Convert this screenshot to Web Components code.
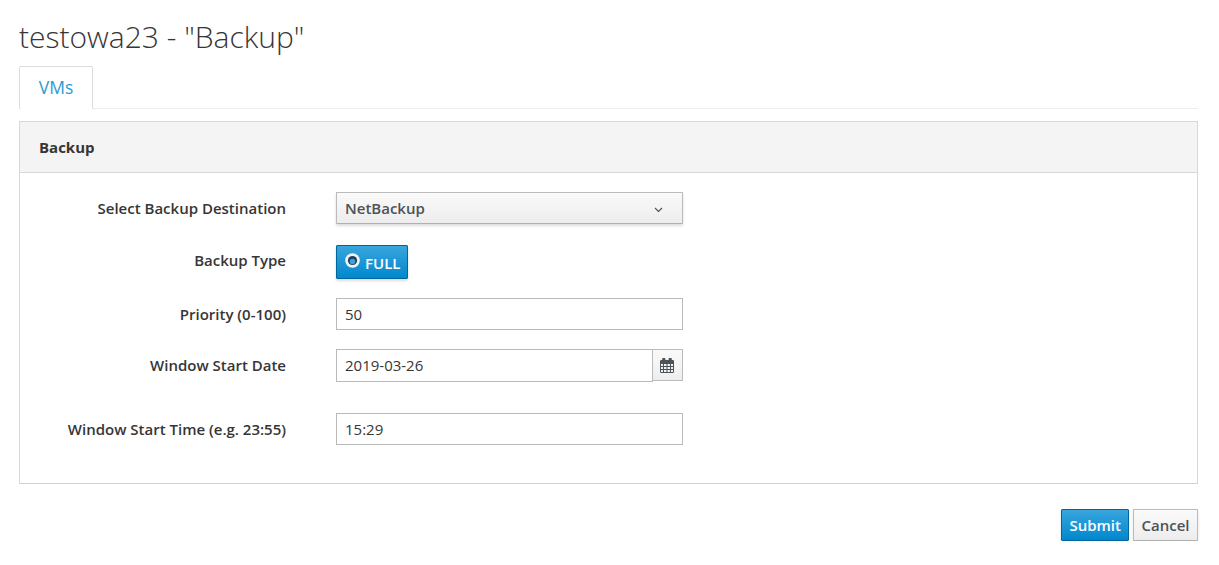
<!DOCTYPE html>
<html lang="en">
<head>
<meta charset="utf-8">
<title>Backup</title>
<style>
  html, body { margin: 0; background: #fff; }
  body { font-family: "Open Sans", "Liberation Sans", sans-serif; color: #363636; }
</style>
</head>
<body>
<backup-page></backup-page>

<script>
class PageTitle extends HTMLElement {
  constructor() {
    super();
    this.attachShadow({ mode: "open" }).innerHTML = `
      <style>
        :host { display: block; height: 66px; box-sizing: border-box; padding-top: 18px; }
        h1 { margin: 0; font-size: 30px; line-height: 38px; font-weight: 300; color: #363636; }
      </style>
      <h1><slot></slot></h1>`;
  }
}

class TabBar extends HTMLElement {
  constructor() {
    super();
    this.attachShadow({ mode: "open" }).innerHTML = `
      <style>
        :host { display: flex; height: 43px; box-sizing: border-box; border-bottom: 1px solid #ededed; margin-right: 21px; }
        a {
          display: block; box-sizing: border-box; width: 74px; height: 43px; text-align: center;
          border: 1px solid #ddd; border-bottom: 0; border-radius: 2px 2px 0 0; background: #fff;
          font-size: 17.5px; line-height: 41px; color: #2b9bd2; text-decoration: none;
        }
      </style>
      <a href="#"><slot></slot></a>`;
  }
}

class BackupPanel extends HTMLElement {
  constructor() {
    super();
    this.attachShadow({ mode: "open" }).innerHTML = `
      <style>
        :host { display: block; box-sizing: border-box; height: 363px; margin: 12px 21px 0 0; border: 1px solid #d8d8d8; border-bottom-color: #d1d1d1; }
        header {
          box-sizing: border-box; height: 51px; padding: 0 19px; background: #f4f4f4; border-bottom: 1px solid #d8d8d8;
          font-size: 15px; line-height: 50px; font-weight: 700; color: #363636;
        }
        .body { display: flex; flex-direction: column; padding-top: 19px; }
      </style>
      <header><slot name="title"></slot></header>
      <div class="body"><slot></slot></div>`;
  }
}

class FormRow extends HTMLElement {
  static get observedAttributes() { return ["label"]; }
  constructor() {
    super();
    this.attachShadow({ mode: "open" }).innerHTML = `
      <style>
        :host { display: grid; grid-template-columns: 266px 347px; column-gap: 50px; align-items: start; }
        label { font-size: 15px; line-height: var(--label-line, 32px); font-weight: 600; color: #363636; text-align: right; white-space: nowrap; }
      </style>
      <label></label>
      <div><slot></slot></div>`;
  }
  attributeChangedCallback(name, old, value) {
    this.shadowRoot.querySelector("label").textContent = value;
  }
}

class TextField extends HTMLElement {
  constructor() {
    super();
    this.attachShadow({ mode: "open" }).innerHTML = `
      <style>
        :host { display: block; box-sizing: border-box; height: 32px; padding: 0 8px; background: #fff; border: 1px solid #bababa; font-size: 15px; line-height: 31px; color: #363636; }
      </style>
      <slot></slot>`;
  }
}

class SelectButton extends HTMLElement {
  constructor() {
    super();
    this.attachShadow({ mode: "open" }).innerHTML = `
      <style>
        :host {
          display: flex; align-items: center; justify-content: space-between; box-sizing: border-box; height: 32px; padding: 0 19px 0 8px;
          border: 1px solid #bbb; border-bottom-color: #b0b0b0; border-radius: 1px;
          background: linear-gradient(#fafafa, #ededed); box-shadow: 0 2px 3px rgba(0,0,0,.14);
          font-size: 15px; font-weight: 600; color: #4d5258;
        }
        svg { display: block; margin-top: 3px; }
      </style>
      <slot></slot>
      <svg width="9" height="6" viewBox="0 0 9 6"><path d="M1 1l3.500 3.500L8 1" fill="none" stroke="#4d5258" stroke-width="1.100"/></svg>`;
  }
}

class RadioButton extends HTMLElement {
  constructor() {
    super();
    this.attachShadow({ mode: "open" }).innerHTML = `
      <style>
        :host {
          display: inline-flex; align-items: center; gap: 5px; box-sizing: border-box; width: 72px; height: 34px; padding: 0 0 0 8px; vertical-align: top;
          border: 1px solid #00659c; border-radius: 1px; background: linear-gradient(#39a5dc, #0088ce);
          box-shadow: 0 2px 3px rgba(0,0,0,.14); color: #fff; font-size: 15px; font-weight: 600;
        }
        svg { display: block; margin-top: -4px; }
        span { line-height: 32px; margin-top: 1px; }
      </style>
      <svg width="15" height="15" viewBox="0 0 15 15">
        <circle cx="7.500" cy="7.500" r="7.300" fill="#eef3f7"/>
        <circle cx="7.500" cy="7.500" r="4.600" fill="#1f3f57"/>
        <circle cx="7.500" cy="8.500" r="2.800" fill="#3f9fd6"/>
      </svg>
      <span><slot></slot></span>`;
  }
}

class DateField extends HTMLElement {
  constructor() {
    super();
    this.attachShadow({ mode: "open" }).innerHTML = `
      <style>
        :host { display: flex; height: 33px; }
        .value { flex: 1; box-sizing: border-box; height: 33px; padding: 0 8px; border: 1px solid #bababa; font-size: 15px; line-height: 31px; color: #363636; }
        .addon {
          box-sizing: border-box; width: 30px; height: 32px; display: flex; align-items: center; justify-content: center;
          border: 1px solid #bbb; border-left: 0; background: linear-gradient(#fafafa, #ededed);
        }
        svg { display: block; margin-left: -1px; }
      </style>
      <div class="value"><slot></slot></div>
      <div class="addon">
        <svg width="14" height="15" viewBox="0 0 14 15">
          <path fill="#4d5258" fill-rule="evenodd" d="M3 0h1.600a.8.8 0 0 1 .8.8V2h3.200V.8a.8.8 0 0 1 .8-.8H11a.8.8 0 0 1 .8.8V2h1A1.200 1.200 0 0 1 14 3.200v10.600a1.200 1.200 0 0 1-1.200 1.200H1.200a1.200 1.200 0 0 1-1.200-1.200V3.200A1.200 1.200 0 0 1 1.200 2h1V.8A.8.8 0 0 1 3 0zM1 6v2h2V6zm3 0v2h2.500V6zm3.500 0v2H10V6zM11 6v2h2V6zM1 9v2h2V9zm3 0v2h2.500V9zm3.500 0v2H10V9zM11 9v2h2V9zM1 12v2h2v-2zm3 0v2h2.500v-2zm3.500 0v2H10v-2zM11 12v2h2v-2z"/>
        </svg>
      </div>`;
  }
}

class ActionButton extends HTMLElement {
  constructor() {
    super();
    this.attachShadow({ mode: "open" }).innerHTML = `
      <style>
        :host {
          display: block; box-sizing: border-box; height: 32px; padding: 0 7.500px; border-radius: 1px;
          border: 1px solid #bbb; border-bottom-color: #b0b0b0; background: linear-gradient(#fafafa, #ededed);
          box-shadow: 0 2px 3px rgba(0,0,0,.12); color: #4d5258; font-size: 15px; font-weight: 600; line-height: 31px;
        }
        :host([primary]) { padding: 0 7px; border-color: #00659c; background: linear-gradient(#39a5dc, #0088ce); color: #fff; }
      </style>
      <slot></slot>`;
  }
}

class BackupPage extends HTMLElement {
  constructor() {
    super();
    this.attachShadow({ mode: "open" }).innerHTML = `
      <style>
        :host { display: block; padding-left: 19px; font-family: "Open Sans", "Liberation Sans", sans-serif; }
        .r1 { margin-bottom: 21px; }
        .r2, .r3 { margin-bottom: 19px; }
        .r2 { --label-line: 30px; }
        .r4 { margin-bottom: 31px; }
        .actions { display: flex; justify-content: flex-end; gap: 4px; margin: 25px 21px 0 0; }
      </style>
      <page-title>testowa23 - "Backup"</page-title>
      <tab-bar>VMs</tab-bar>
      <backup-panel>
        <span slot="title">Backup</span>
        <form-row class="r1" label="Select Backup Destination"><select-button>NetBackup</select-button></form-row>
        <form-row class="r2" label="Backup Type"><radio-button>FULL</radio-button></form-row>
        <form-row class="r3" label="Priority (0-100)"><text-field>50</text-field></form-row>
        <form-row class="r4" label="Window Start Date"><date-field>2019-03-26</date-field></form-row>
        <form-row label="Window Start Time (e.g. 23:55)"><text-field>15:29</text-field></form-row>
      </backup-panel>
      <div class="actions">
        <action-button primary>Submit</action-button>
        <action-button>Cancel</action-button>
      </div>`;
  }
}

customElements.define("page-title", PageTitle);
customElements.define("tab-bar", TabBar);
customElements.define("backup-panel", BackupPanel);
customElements.define("form-row", FormRow);
customElements.define("text-field", TextField);
customElements.define("select-button", SelectButton);
customElements.define("radio-button", RadioButton);
customElements.define("date-field", DateField);
customElements.define("action-button", ActionButton);
customElements.define("backup-page", BackupPage);
</script>
</body>
</html>
